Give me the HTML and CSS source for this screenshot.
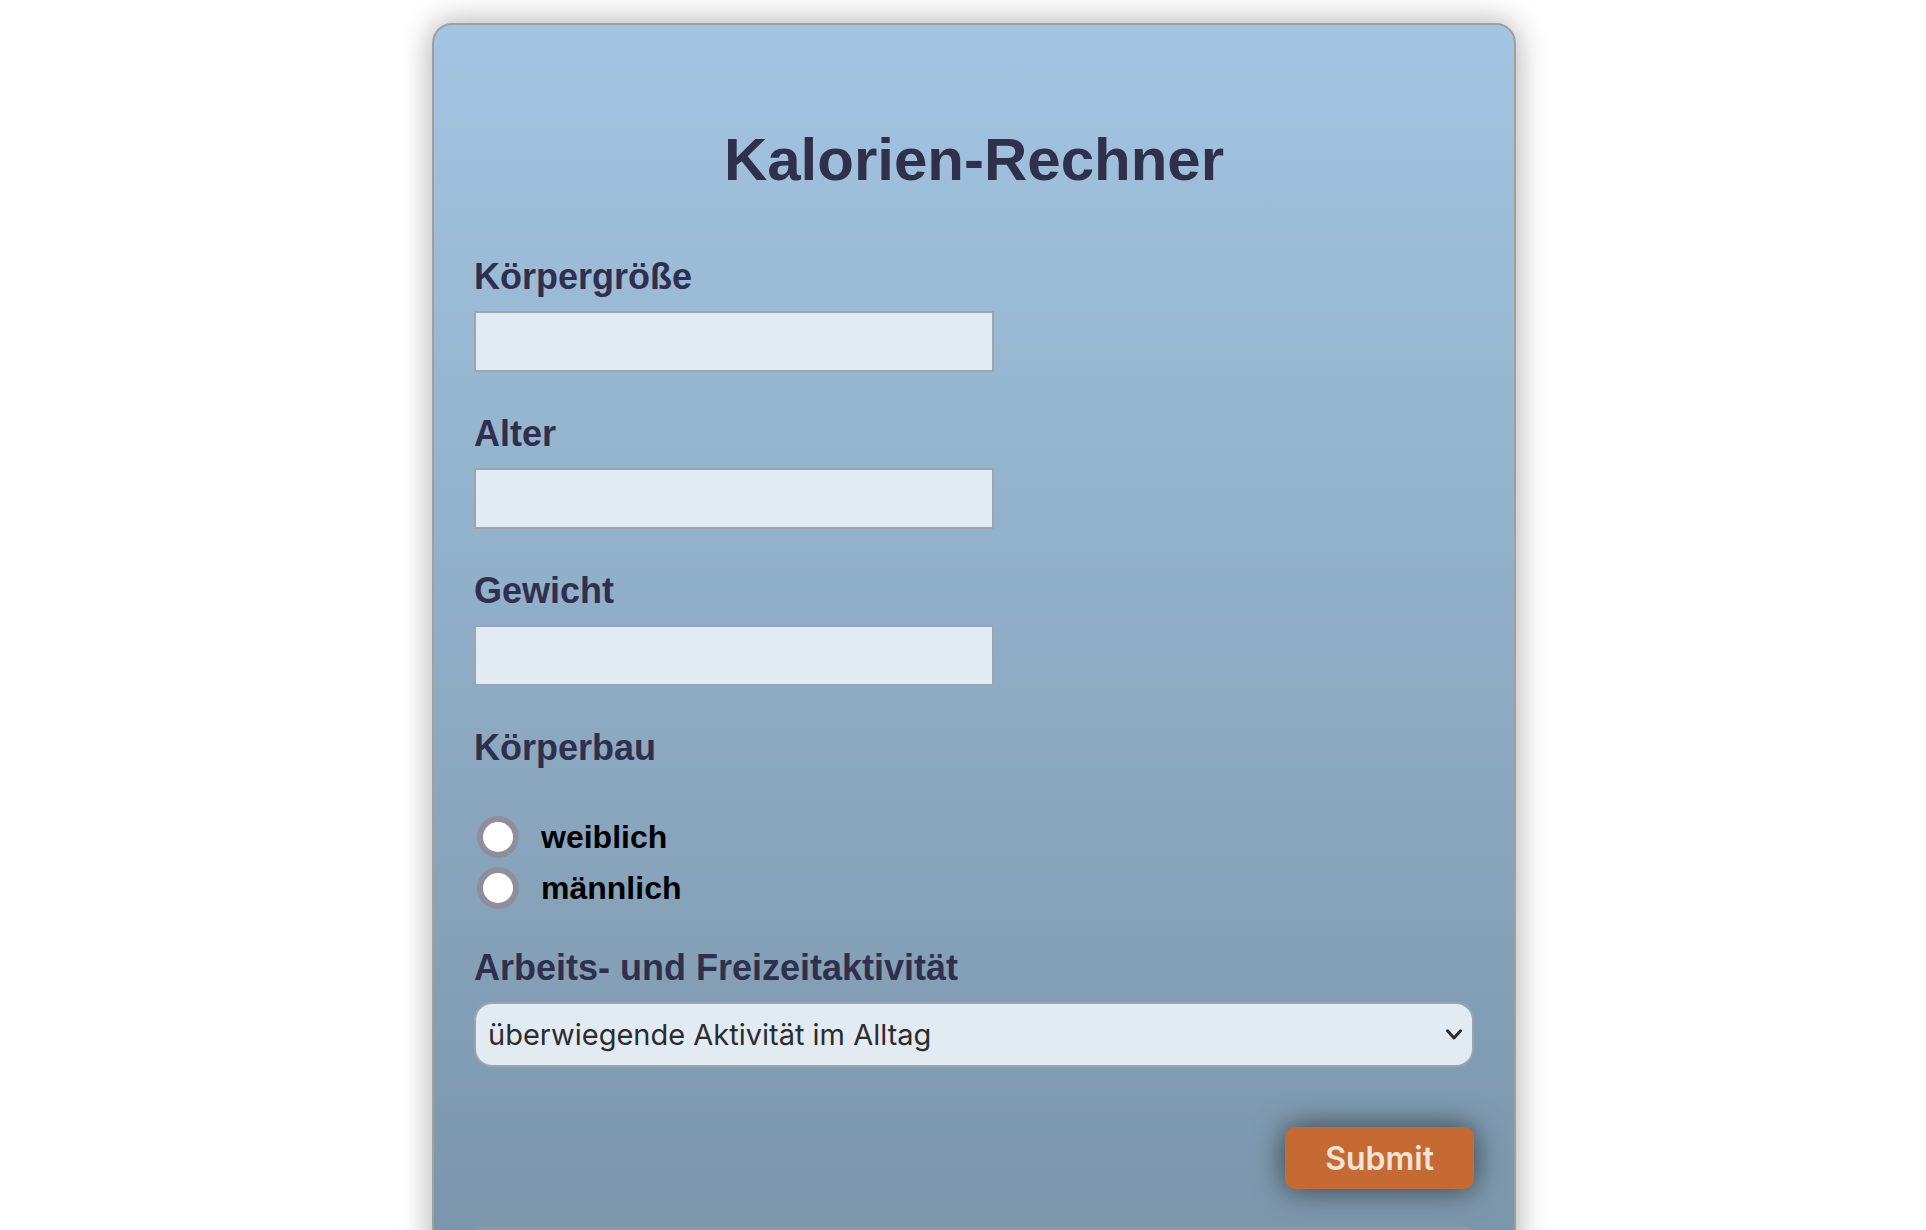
FILE: index.html
```html
<!DOCTYPE html>
<html lang="de">
<head>
<meta charset="utf-8">
<title>Kalorien-Rechner</title>
<link rel="stylesheet" href="styles.css">
</head>
<body>
<main class="page">
  <form class="card">
    <h1 class="title">Kalorien-Rechner</h1>
    <div class="field">
      <label class="label" for="height">Körpergröße</label>
      <input class="input" id="height" type="text">
    </div>
    <div class="field">
      <label class="label" for="age">Alter</label>
      <input class="input" id="age" type="text">
    </div>
    <div class="field">
      <label class="label" for="weight">Gewicht</label>
      <input class="input" id="weight" type="text">
    </div>
    <fieldset class="group">
      <legend class="label">Körperbau</legend>
      <div class="options">
        <label class="option"><input class="radio" type="radio" name="body" value="w">weiblich</label>
        <label class="option"><input class="radio" type="radio" name="body" value="m">männlich</label>
      </div>
    </fieldset>
    <div class="field">
      <label class="label" for="activity">Arbeits- und Freizeitaktivität</label>
      <div class="select-wrap">
        <select class="select" id="activity">
          <option>überwiegende Aktivität im Alltag</option>
        </select>
        <svg class="chevron" width="16" height="11" viewBox="0 0 16 11" fill="none" stroke="#2c2c2e" stroke-width="3" stroke-linecap="round" stroke-linejoin="round" aria-hidden="true"><path d="M1.5 1.8 8 9l6.500-7.200"/></svg>
      </div>
    </div>
    <div class="actions">
      <button class="submit" type="submit">Submit</button>
    </div>
    <output class="result"></output>
  </form>
</main>
</body>
</html>
```

FILE: styles.css
```css
* {
  box-sizing: border-box;
}

body {
  margin: 0;
  background: #fff;
  font-family: "Liberation Sans", Arial, sans-serif;
}

.page {
  height: 100vh;
  overflow-y: auto;
  scrollbar-width: none;
  padding: 23px 20px 40px 42px;
}

.card {
  display: flex;
  flex-direction: column;
  max-width: 1084px;
  margin: 0 auto;
  padding: 80px 40px 40px;
  border: 2px solid #9f9f9f;
  border-radius: 20px;
  background: linear-gradient(#a3c5e1, #7892a7);
  box-shadow: 0 0 32px rgba(0, 0, 0, 0.35);
}

.title {
  margin: 20px 0 61px;
  color: #30304e;
  font-size: 60px;
  line-height: 70px;
  text-align: center;
}

.field {
  display: flex;
  flex-direction: column;
  gap: 14px;
  margin-bottom: 41px;
}

.label {
  padding: 0;
  color: #30304e;
  font-size: 36px;
  font-weight: 700;
  line-height: 41px;
}

.input {
  width: 52%;
  height: 61px;
  padding: 0 12px;
  border: 2px solid #98a6b4;
  border-radius: 0;
  background: #e2eaf2;
  color: #2c2c2e;
  font: 29px Inter, sans-serif;
}

.group {
  margin: 0 0 38px;
  padding: 0;
  border: 0;
}

.options {
  display: flex;
  flex-direction: column;
  gap: 9px;
  padding: 48px 0 0 3px;
}

.option {
  display: flex;
  align-items: center;
  gap: 22px;
  font-size: 32px;
  font-weight: 700;
  line-height: 40px;
}

.radio {
  appearance: none;
  width: 42px;
  height: 42px;
  margin: 0;
  border: 6px solid #908e9c;
  border-radius: 50%;
  background: #fff;
}

.radio:checked {
  background: #30304e;
}

.select-wrap {
  display: grid;
  align-items: center;
}

.select {
  grid-area: 1 / 1;
  appearance: none;
  width: 100%;
  height: 65px;
  padding: 0 40px 0 12px;
  border: 2px solid #98a6b4;
  border-radius: 18px;
  background: #e2eaf2;
  color: #2c2c2e;
  font: 29px Inter, sans-serif;
}

.chevron {
  grid-area: 1 / 1;
  justify-self: end;
  margin-right: 12px;
  pointer-events: none;
}

.actions {
  display: flex;
  justify-content: flex-end;
  margin: 19px 0 38px;
}

.submit {
  height: 62px;
  padding: 0 40px;
  border: 0;
  border-radius: 10px;
  background: #c46a32;
  box-shadow: 0 0 30px rgba(0, 0, 0, 0.6);
  color: #f3e4d7;
  font: 600 32px Inter, sans-serif;
}

.result {
  display: block;
  min-height: 62px;
  border-radius: 10px;
  background: #8f9aa6;
  box-shadow: 0 0 4px #8f9aa6;
}
```
